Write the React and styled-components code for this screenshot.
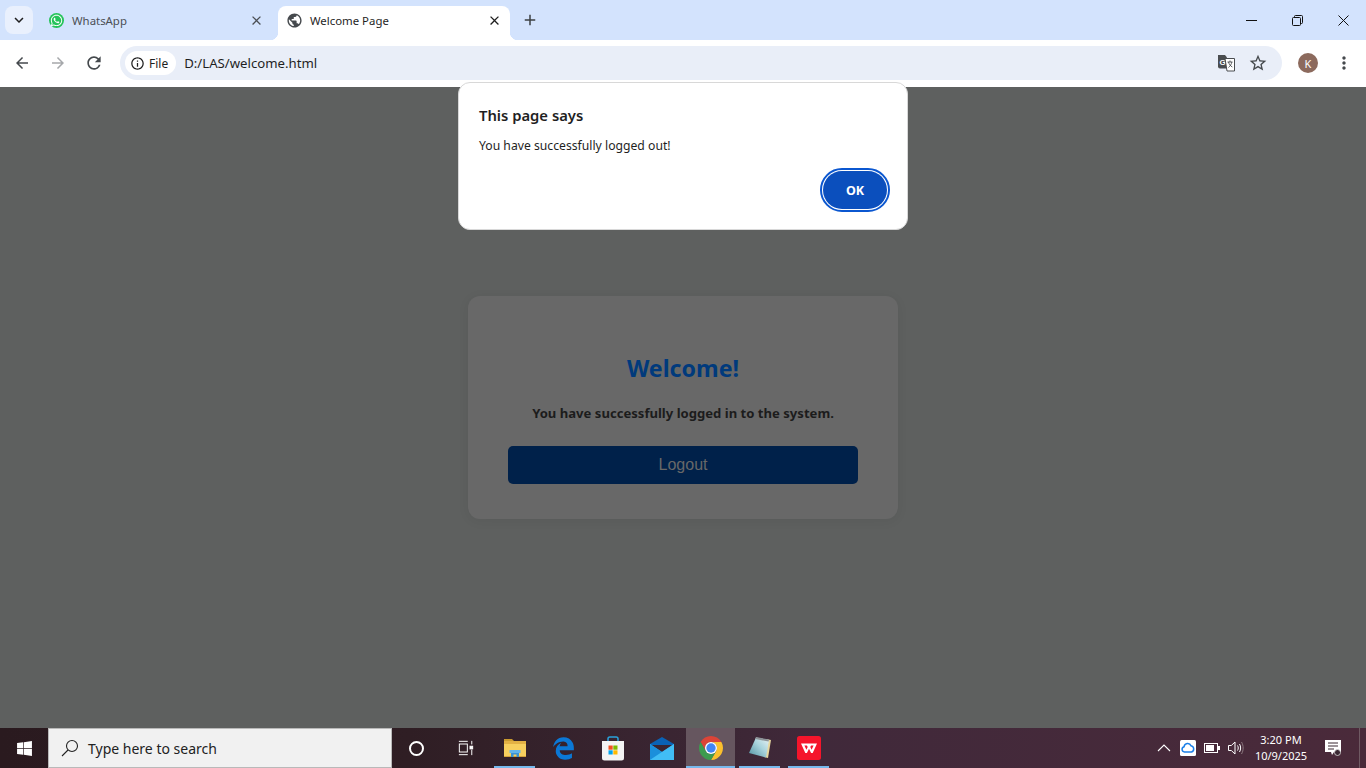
import React from "react";
import styled, { createGlobalStyle } from "styled-components";
import {
  MdArrowBack,
  MdArrowForward,
  MdRefresh,
  MdInfoOutline,
  MdStarBorder,
  MdMoreVert,
  MdClose,
  MdAdd,
  MdKeyboardArrowDown,
  MdPublic,
} from "react-icons/md";
import { FaWhatsapp, FaWindows, FaEdgeLegacy } from "react-icons/fa";

const UI_FONT = `"Noto Sans", "Open Sans", "Liberation Sans", sans-serif`;

const GlobalStyle = createGlobalStyle`
  html, body { margin: 0; padding: 0; height: 100%; overflow: hidden; }
  body { font-family: ${UI_FONT}; }
  #root { height: 100%; }
`;

function ChromeLogo() {
  return (
    <svg width="24" height="24" viewBox="4 4 40 40">
      <path d="M6.680 14A20 20 0 0 1 41.320 14H24A10 10 0 0 0 15.340 29z" fill="#db4437" />
      <path d="M41.320 14A20 20 0 0 1 24 44L32.660 29A10 10 0 0 0 24 14z" fill="#fbc02d" />
      <path d="M24 44A20 20 0 0 1 6.680 14L15.340 29A10 10 0 0 0 32.660 29z" fill="#3d9b4f" />
      <circle cx="24" cy="24" r="10" fill="#fff" />
      <circle cx="24" cy="24" r="7.800" fill="#4285f4" />
    </svg>
  );
}

function FolderLogo() {
  return (
    <svg width="22" height="20" viewBox="0 0 22 20">
      <path d="M0 1h8l2 2v2H0z" fill="#c99a2e" />
      <rect y="3" width="22" height="16" fill="#f7cf5e" />
      <rect y="3" width="22" height="3" fill="#e3b144" />
      <rect y="18" width="22" height="1" fill="#d3a23c" />
      <path d="M7 19v-5h8v5h-2.500v-2.600h-3V19z" fill="#3a93d6" />
      <rect x="5.500" y="12" width="11" height="3" fill="#63b4ea" />
    </svg>
  );
}

function StoreLogo() {
  return (
    <svg width="24" height="25" viewBox="0 0 24 25">
      <path d="M7 7V2.800C7 1.800 7.700 1 8.800 1h6.400C16.300 1 17 1.800 17 2.800V7" fill="none" stroke="#2aa3dc" strokeWidth="1.500" />
      <path d="M1 5h22v17a2.500 2.500 0 0 1-2.500 2.500h-17A2.500 2.500 0 0 1 1 22z" fill="#f4f4f4" />
      <rect x="7.500" y="9.500" width="4.200" height="4.200" fill="#f25022" />
      <rect x="12.300" y="9.500" width="4.200" height="4.200" fill="#7fba00" />
      <rect x="7.500" y="14.300" width="4.200" height="4.200" fill="#00a4ef" />
      <rect x="12.300" y="14.300" width="4.200" height="4.200" fill="#ffb900" />
    </svg>
  );
}

function MailLogo() {
  return (
    <svg width="24" height="23" viewBox="0 0 24 23">
      <path d="M0 7L12 0l12 7v1H0z" fill="#0a62b5" />
      <path d="M0 7l12 8 12-8v16H0z" fill="#29a8ea" />
      <path d="M0 23V7l12 8z" fill="#1b8fdb" />
      <path d="M0 23l24-16v16z" fill="#41bdf5" />
    </svg>
  );
}

function NotesLogo() {
  return (
    <svg width="24" height="24" viewBox="0 0 24 24">
      <defs>
        <linearGradient id="notePage" x1="0" y1="1" x2="1" y2="0">
          <stop offset="0" stopColor="#4f8f9f" />
          <stop offset="0.55" stopColor="#a8d3dc" />
          <stop offset="1" stopColor="#eaf3f4" />
        </linearGradient>
      </defs>
      <path d="M18 3l5 1-3 18-4-1z" fill="#e6d79f" />
      <path d="M8 1.500l13 2.500-3 17.500L1 17z" fill="url(#notePage)" />
      <path d="M8 1l13 2.500-.4 2L7.200 3z" fill="#8d9498" />
    </svg>
  );
}

function WpsLogo() {
  return (
    <svg width="24" height="24" viewBox="0 0 24 24">
      <rect width="24" height="24" rx="2.500" fill="#f5152b" />
      <path d="M4 7.500h16l-4.300 9.500h-1.600L12 12.800 9.900 17H8.300z" fill="#fff" />
      <path d="M7.400 9.500l2 4.300 1.300-2.700-.8-1.600zM16.600 9.500l-2 4.300-1.300-2.700.8-1.600z" fill="#f5152b" />
    </svg>
  );
}

function TaskViewIcon() {
  return (
    <svg width="16" height="16" viewBox="0 0 18 18" fill="none" stroke="#fff" strokeWidth="1.100">
      <path d="M1 1.500h10M1 16.500h10" />
      <rect x="1.500" y="4.500" width="9" height="9" />
      <path d="M15.500 1v4M15.500 11v6" />
      <rect x="13.500" y="7" width="3" height="3" fill="#fff" />
    </svg>
  );
}

function SearchIcon() {
  return (
    <svg width="18" height="18" viewBox="0 0 18 18" fill="none" stroke="#222" strokeWidth="1.100">
      <circle cx="11" cy="7" r="5.500" />
      <path d="M7 11l-6 6" />
    </svg>
  );
}

function TranslateIcon() {
  return (
    <svg width="18" height="18" viewBox="0 0 18 18">
      <path d="M1 1h7l2 2.500v11H3a2 2 0 0 1-2-2z" fill="#4a4d50" />
      <text x="2.500" y="11" fontSize="8" fontWeight="700" fill="#fff" fontFamily="Liberation Sans">G</text>
      <path d="M8 4.500h9.500V17H10z" fill="#fff" stroke="#4a4d50" strokeWidth="1" />
      <path d="M10.500 8h5M13 6.500V8M11.500 8c.5 2 2 4 3.800 5M14.800 8c-.3 2-1.500 4-3.300 5.500" fill="none" stroke="#4a4d50" strokeWidth=".9" />
    </svg>
  );
}

function CloudTrayIcon() {
  return (
    <svg width="16" height="16" viewBox="0 0 16 16">
      <rect width="16" height="16" rx="1.500" fill="#fff" />
      <path d="M4.500 12a2.700 2.700 0 0 1-.4-5.300 3.600 3.600 0 0 1 6.900-.9A3.200 3.200 0 0 1 11.500 12z" fill="none" stroke="#1a7fe8" strokeWidth="1.500" />
    </svg>
  );
}

function BatteryIcon() {
  return (
    <svg width="16" height="10" viewBox="0 0 16 10">
      <rect x=".5" y=".5" width="13" height="9" fill="none" stroke="#fff" />
      <rect x="2" y="2" width="8" height="6" fill="#fff" />
      <rect x="14" y="3" width="2" height="4" fill="#fff" />
    </svg>
  );
}

function SpeakerIcon() {
  return (
    <svg width="16" height="14" viewBox="0 0 16 14" fill="none" stroke="#fff" strokeWidth="1">
      <path d="M.5 4.500h2.800L7 1v12L3.300 9.500H.5z" />
      <path d="M9.500 4.500c1 1.500 1 3.500 0 5M11.500 3c1.500 2.500 1.500 5.500 0 8" />
      <path d="M13.500 1c2.200 3.500 2.200 8.500 0 12" stroke="#8c7a80" />
    </svg>
  );
}

function NotifyIcon() {
  return (
    <svg width="16" height="16" viewBox="0 0 16 16">
      <path d="M0 0h16v12H9l-2 3-1-3H0z" fill="#fff" />
      <path d="M3 3h10M3 6h10M3 9h6" stroke="#3a2833" strokeWidth="1" />
      <circle cx="12.500" cy="12.500" r="3" fill="#3a2833" stroke="#ddd" strokeWidth=".8" />
    </svg>
  );
}

export default function App() {
  return (
    <>
      <GlobalStyle />
      <Screen>
        <TabStrip>
          <TabSearch>
            <MdKeyboardArrowDown size={18} />
          </TabSearch>
          <InactiveTab>
            <WhatsappBadge>
              <FaWhatsapp size={13} />
            </WhatsappBadge>
            <TabTitle $muted>WhatsApp</TabTitle>
            <TabClose $muted>
              <MdClose size={15} />
            </TabClose>
          </InactiveTab>
          <ActiveTab>
            <MdPublic size={17} color="#45494d" />
            <TabTitle>Welcome Page</TabTitle>
            <TabClose>
              <MdClose size={15} />
            </TabClose>
          </ActiveTab>
          <NewTab>
            <MdAdd size={18} />
          </NewTab>
          <WindowControls>
            <WindowButton>
              <svg width="11" height="11" viewBox="0 0 11 11">
                <path d="M0 5.500h11" stroke="#111" strokeWidth="1" />
              </svg>
            </WindowButton>
            <WindowButton>
              <svg width="11" height="11" viewBox="0 0 11 11" fill="none" stroke="#111">
                <rect x=".5" y="2.500" width="8" height="8" rx="1" />
                <path d="M2.500 2.500V1.500a1 1 0 0 1 1-1h6a1 1 0 0 1 1 1v6a1 1 0 0 1-1 1h-1" />
              </svg>
            </WindowButton>
            <WindowButton>
              <svg width="11" height="11" viewBox="0 0 11 11">
                <path d="M.5.500l10 10M10.500.500l-10 10" stroke="#111" strokeWidth="1" />
              </svg>
            </WindowButton>
          </WindowControls>
        </TabStrip>

        <Toolbar>
          <NavButton>
            <MdArrowBack size={18} />
          </NavButton>
          <NavButton $disabled>
            <MdArrowForward size={18} />
          </NavButton>
          <NavButton>
            <MdRefresh size={20} />
          </NavButton>
          <AddressBar>
            <FileChip>
              <MdInfoOutline size={15} />
              <span>File</span>
            </FileChip>
            <UrlText>D:/LAS/welcome.html</UrlText>
            <AddressIcons>
              <TranslateIcon />
              <MdStarBorder size={20} color="#45494d" />
            </AddressIcons>
          </AddressBar>
          <Avatar>K</Avatar>
          <MenuButton>
            <MdMoreVert size={20} />
          </MenuButton>
        </Toolbar>

        <Page>
          <Card>
            <Heading>Welcome!</Heading>
            <CardText>You have successfully logged in to the system.</CardText>
            <LogoutButton>Logout</LogoutButton>
          </Card>
          <Dialog>
            <DialogTitle>This page says</DialogTitle>
            <DialogText>You have successfully logged out!</DialogText>
            <DialogActions>
              <OkButton>OK</OkButton>
            </DialogActions>
          </Dialog>
        </Page>

        <Taskbar>
          <StartButton>
            <FaWindows size={17} color="#fff" />
          </StartButton>
          <SearchBox>
            <SearchIcon />
            <span>Type here to search</span>
          </SearchBox>
          <TaskItem>
            <CortanaRing />
          </TaskItem>
          <TaskItem>
            <TaskViewIcon />
          </TaskItem>
          <TaskItem $open>
            <FolderLogo />
          </TaskItem>
          <TaskItem>
            <FaEdgeLegacy size={23} color="#0b78d6" />
          </TaskItem>
          <TaskItem>
            <StoreLogo />
          </TaskItem>
          <TaskItem>
            <MailLogo />
          </TaskItem>
          <TaskItem $open $active>
            <ChromeLogo />
          </TaskItem>
          <TaskItem $open>
            <NotesLogo />
          </TaskItem>
          <TaskItem $open>
            <WpsLogo />
          </TaskItem>
          <Tray>
            <TraySlot>
              <svg width="14" height="8" viewBox="0 0 14 8" fill="none" stroke="#fff" strokeWidth="1.100">
                <path d="M1 7l6-6 6 6" />
              </svg>
            </TraySlot>
            <TraySlot>
              <CloudTrayIcon />
            </TraySlot>
            <TraySlot>
              <BatteryIcon />
            </TraySlot>
            <TraySlot>
              <SpeakerIcon />
            </TraySlot>
            <Clock>
              <span>3:20 PM</span>
              <span>10/9/2025</span>
            </Clock>
            <NotifySlot>
              <NotifyIcon />
            </NotifySlot>
            <ShowDesktop />
          </Tray>
        </Taskbar>
      </Screen>
    </>
  );
}

const Screen = styled.div`
  width: 1366px;
  height: 768px;
  display: flex;
  flex-direction: column;
  overflow: hidden;
`;

const TabStrip = styled.div`
  height: 40px;
  flex: none;
  box-sizing: border-box;
  padding: 6px 0 0 5px;
  display: flex;
  align-items: flex-start;
  background: #d3e3fd;
`;

const TabSearch = styled.div`
  width: 28px;
  height: 28px;
  margin-right: 6px;
  border-radius: 8px;
  background: #e9f0fd;
  color: #1f1f1f;
  display: flex;
  align-items: center;
  justify-content: center;
`;

const InactiveTab = styled.div`
  width: 239px;
  height: 34px;
  box-sizing: border-box;
  padding: 0 14px 6px 10px;
  display: flex;
  align-items: center;
  gap: 8px;
`;

const WhatsappBadge = styled.div`
  width: 15px;
  height: 15px;
  border-radius: 50%;
  background: #25c35a;
  color: #fff;
  display: flex;
  align-items: center;
  justify-content: center;
`;

const ActiveTab = styled.div`
  position: relative;
  width: 232px;
  height: 34px;
  box-sizing: border-box;
  padding: 0 8px 6px 8px;
  display: flex;
  align-items: center;
  gap: 7px;
  background: #fff;
  border-radius: 8px 8px 0 0;

  &::before,
  &::after {
    content: "";
    position: absolute;
    bottom: 0;
    width: 8px;
    height: 8px;
  }
  &::before {
    left: -8px;
    background: radial-gradient(circle at 0 0, transparent 8px, #fff 8.5px);
  }
  &::after {
    right: -8px;
    background: radial-gradient(circle at 100% 0, transparent 8px, #fff 8.5px);
  }
`;

const TabTitle = styled.span`
  flex: 1;
  font-size: 11.400px;
  color: ${(p) => (p.$muted ? "#4b4f54" : "#1f1f1f")};
  white-space: nowrap;
`;

const TabClose = styled.div`
  display: flex;
  color: ${(p) => (p.$muted ? "#4b4f54" : "#1f1f1f")};
`;

const NewTab = styled.div`
  width: 24px;
  height: 28px;
  margin-left: 8px;
  color: #3c4043;
  display: flex;
  align-items: center;
  justify-content: center;
`;

const WindowControls = styled.div`
  margin-left: auto;
  margin-top: -6px;
  display: flex;
`;

const WindowButton = styled.div`
  width: 46px;
  height: 40px;
  display: flex;
  align-items: center;
  justify-content: center;
`;

const Toolbar = styled.div`
  height: 47px;
  flex: none;
  box-sizing: border-box;
  padding: 0 0 1px 4px;
  display: flex;
  align-items: center;
  background: #fff;
  border-radius: 8px 8px 0 0;
`;

const NavButton = styled.div`
  width: 36px;
  height: 34px;
  display: flex;
  align-items: center;
  justify-content: center;
  color: ${(p) => (p.$disabled ? "#a6a8ab" : "#45494d")};
`;

const AddressBar = styled.div`
  width: 1162px;
  height: 34px;
  margin-left: 8px;
  box-sizing: border-box;
  padding: 0 14px 0 5px;
  display: flex;
  align-items: center;
  background: #e9eef8;
  border-radius: 17px;
`;

const FileChip = styled.div`
  height: 24px;
  padding: 0 8px 0 5px;
  display: flex;
  align-items: center;
  gap: 4px;
  background: #fff;
  border-radius: 12px;
  font-size: 12px;
  color: #1f1f1f;
`;

const UrlText = styled.span`
  margin-left: 8px;
  font-size: 13.200px;
  color: #1f1f1f;
`;

const AddressIcons = styled.div`
  margin-left: auto;
  display: flex;
  align-items: center;
  gap: 13px;
`;

const Avatar = styled.div`
  width: 20px;
  height: 20px;
  margin-left: 16px;
  border-radius: 50%;
  background: #8c6a5d;
  color: #fff;
  font-size: 11px;
  display: flex;
  align-items: center;
  justify-content: center;
`;

const MenuButton = styled.div`
  width: 20px;
  margin-left: 16px;
  display: flex;
  justify-content: center;
  color: #45494d;
`;

const Page = styled.div`
  position: relative;
  flex: 1;
  display: flex;
  align-items: center;
  justify-content: center;
  background: #5e605f;
`;

const Card = styled.div`
  width: 430px;
  height: 223px;
  box-sizing: border-box;
  padding: 40px;
  display: flex;
  flex-direction: column;
  align-items: center;
  background: #686868;
  border-radius: 12px;
  box-shadow: 0 2px 12px rgba(0, 0, 0, 0.06);
`;

const Heading = styled.h1`
  margin: 16px 0 0;
  font-size: 23.200px;
  line-height: 33px;
  font-weight: 700;
  color: #003a7c;
`;

const CardText = styled.p`
  margin: 18px 0 0;
  font-size: 13.100px;
  line-height: 20px;
  font-weight: 700;
  color: #1c1c1c;
`;

const LogoutButton = styled.div`
  width: 100%;
  height: 38px;
  margin-top: 23px;
  flex: none;
  display: flex;
  align-items: center;
  justify-content: center;
  background: #00214a;
  border-radius: 5px;
  font-family: "Liberation Sans", Arial, sans-serif;
  font-size: 16px;
  color: #686868;
`;

const Dialog = styled.div`
  position: absolute;
  top: -5px;
  left: 458px;
  width: 450px;
  height: 148px;
  box-sizing: border-box;
  padding: 22px 20px 0 20px;
  background: #fff;
  border: 1px solid #d8d8d8;
  border-radius: 12px;
`;

const DialogTitle = styled.div`
  font-size: 14.800px;
  line-height: 20px;
  font-weight: 600;
  color: #1f1f1f;
`;

const DialogText = styled.div`
  margin-top: 12px;
  font-size: 12.200px;
  line-height: 18px;
  color: #1f1f1f;
`;

const DialogActions = styled.div`
  margin-top: 16px;
  display: flex;
  justify-content: flex-end;
`;

const OkButton = styled.div`
  width: 64px;
  height: 38px;
  display: flex;
  align-items: center;
  justify-content: center;
  background: #0b4fbd;
  color: #fff;
  border-radius: 19px;
  outline: 2.500px solid #0b57d0;
  outline-offset: 1.500px;
  font-size: 12.500px;
  font-weight: 700;
`;

const Taskbar = styled.div`
  height: 40px;
  flex: none;
  display: flex;
  align-items: stretch;
  background: linear-gradient(90deg, #2a1a1f 0%, #2f1e24 30%, #40293a 60%, #4a2a3a 100%);
`;

const StartButton = styled.div`
  width: 48px;
  display: flex;
  align-items: center;
  justify-content: center;
`;

const SearchBox = styled.div`
  width: 344px;
  box-sizing: border-box;
  padding-left: 12px;
  display: flex;
  align-items: center;
  gap: 9px;
  background: #f1f1f1;
  border: 1px solid #b9b9b9;
  font-size: 14px;
  color: #222;
`;

const CortanaRing = styled.div`
  width: 11px;
  height: 11px;
  border: 2px solid #fff;
  border-radius: 50%;
`;

const TaskItem = styled.div`
  position: relative;
  width: 49px;
  display: flex;
  align-items: center;
  justify-content: center;
  background: ${(p) => (p.$active ? "#66565f" : "transparent")};

  &::after {
    content: "";
    display: ${(p) => (p.$open ? "block" : "none")};
    position: absolute;
    bottom: 0;
    left: ${(p) => (p.$active ? "0" : "4px")};
    right: ${(p) => (p.$active ? "0" : "4px")};
    height: 2px;
    background: #76b9ed;
  }
`;

const Tray = styled.div`
  margin-left: auto;
  display: flex;
  align-items: center;
`;

const TraySlot = styled.div`
  width: 24px;
  display: flex;
  align-items: center;
  justify-content: center;
`;

const Clock = styled.div`
  width: 66px;
  display: flex;
  flex-direction: column;
  align-items: center;
  font-size: 11px;
  line-height: 16px;
  color: #fff;
`;

const NotifySlot = styled.div`
  width: 30px;
  margin-left: 4px;
  display: flex;
  justify-content: center;
`;

const ShowDesktop = styled.div`
  width: 6px;
  height: 100%;
  margin-left: 11px;
  border-left: 1px solid #6f5a63;
`;
